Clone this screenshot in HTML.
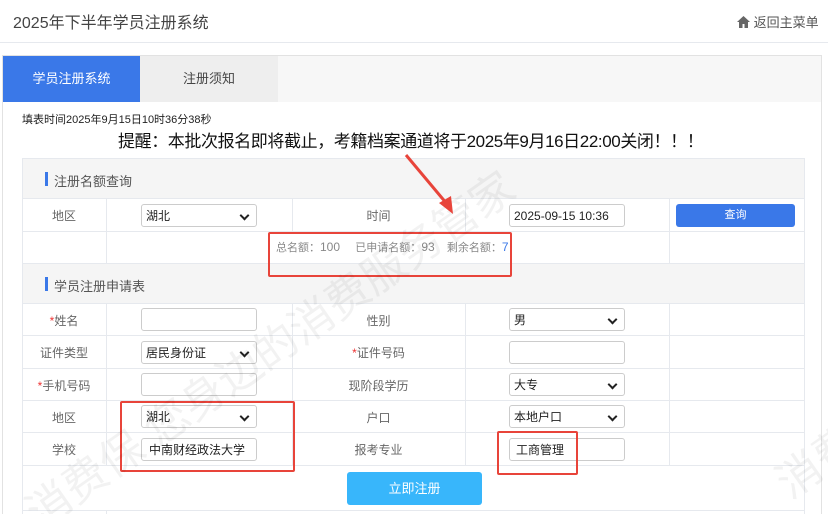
<!DOCTYPE html>
<html><head><meta charset="utf-8"><style>
*{box-sizing:border-box;margin:0;padding:0}
html,body{width:828px;height:514px;overflow:hidden}
body{background:#fff;position:relative;font-family:"Liberation Sans","Noto Sans CJK SC",sans-serif;color:#555}
.a{position:absolute}
.hl{background:#e6e9ee}
.lbl{position:absolute;font-size:12px;color:#666;text-align:center}
.inp{position:absolute;height:23px;border:1px solid #ccc;border-radius:3px;background:#fff;font-size:12px;color:#222;padding:4px 4px;line-height:14px}
.sel::after{content:"";position:absolute;right:8px;top:7px;width:5px;height:5px;border-right:2px solid #222;border-bottom:2px solid #222;transform:rotate(45deg)}
.red{position:absolute;border:2px solid #e8443a;border-radius:2px}
.sec{position:absolute;left:23px;width:781px;height:40px;background:#f5f5f5;font-size:13px;color:#555;padding:12px 0 0 22px}
.sec::before{content:"";position:absolute;left:22px;top:13px;width:3px;height:14px;background:#3a78e8}
.sec span{margin-left:9px}
</style></head><body>
<div class="a" style="left:13px;top:9px;font-size:16px;color:#444">2025年下半年学员注册系统</div>
<div class="a" style="left:737px;top:12px;font-size:13px;color:#555"><svg width="13" height="12" viewBox="0 0 13 12" style="vertical-align:-1px"><path d="M6.5 0L0 6h2v6h3.5V8h2v4H11V6h2z" fill="#666"/></svg> 返回主菜单</div>
<div class="a hl" style="left:0;top:42px;width:828px;height:1px"></div>
<div class="a" style="left:2px;top:55px;width:820px;height:459px;border:1px solid #e2e2e2;border-bottom:none"></div>
<div class="a" style="left:3px;top:56px;width:818px;height:46px;background:#f7f7f7"></div>
<div class="a" style="left:3px;top:56px;width:137px;height:46px;background:#3a78e8;color:#fff;font-size:13px;text-align:center;line-height:46px">学员注册系统</div>
<div class="a" style="left:140px;top:56px;width:138px;height:46px;background:#eee;color:#444;font-size:13px;text-align:center;line-height:46px">注册须知</div>
<div class="a" style="left:22px;top:111px;font-size:11px;color:#222">填表时间2025年9月15日10时36分38秒</div>
<div class="a" style="left:118px;top:127px;font-size:17px;letter-spacing:-0.4px;color:#111;white-space:nowrap">提醒：本批次报名即将截止，考籍档案通道将于2025年9月16日22:00关闭！！！</div>
<div class="a" style="left:22px;top:158px;width:783px;height:356px;border:1px solid #e6e9ee;border-bottom:none"></div>
<div class="sec" style="top:159px"><span>注册名额查询</span></div>
<div class="sec" style="top:264px"><span>学员注册申请表</span></div>
<div class="a hl" style="left:22px;top:198px;width:783px;height:1px"></div>
<div class="a hl" style="left:22px;top:231px;width:783px;height:1px"></div>
<div class="a hl" style="left:22px;top:263px;width:783px;height:1px"></div>
<div class="a hl" style="left:22px;top:303px;width:783px;height:1px"></div>
<div class="a hl" style="left:22px;top:335px;width:783px;height:1px"></div>
<div class="a hl" style="left:22px;top:368px;width:783px;height:1px"></div>
<div class="a hl" style="left:22px;top:400px;width:783px;height:1px"></div>
<div class="a hl" style="left:22px;top:432px;width:783px;height:1px"></div>
<div class="a hl" style="left:22px;top:465px;width:783px;height:1px"></div>
<div class="a hl" style="left:22px;top:510px;width:783px;height:1px"></div>
<div class="a hl" style="left:106px;top:198px;width:1px;height:65px"></div>
<div class="a hl" style="left:292px;top:198px;width:1px;height:33px"></div>
<div class="a hl" style="left:465px;top:198px;width:1px;height:33px"></div>
<div class="a hl" style="left:669px;top:198px;width:1px;height:65px"></div>
<div class="a hl" style="left:106px;top:303px;width:1px;height:162px"></div>
<div class="a hl" style="left:292px;top:303px;width:1px;height:162px"></div>
<div class="a hl" style="left:465px;top:303px;width:1px;height:162px"></div>
<div class="a hl" style="left:669px;top:303px;width:1px;height:162px"></div>
<div class="a hl" style="left:106px;top:510px;width:1px;height:4px"></div>
<div class="lbl" style="left:22px;top:207px;width:84px">地区</div>
<div class="inp sel" style="left:141px;top:204px;width:116px">湖北</div>
<div class="lbl" style="left:292px;top:207px;width:173px">时间</div>
<div class="inp" style="left:509px;top:204px;width:116px">2025-09-15 10:36</div>
<div class="a" style="left:676px;top:204px;width:119px;height:23px;background:#3a78e8;border-radius:3px;color:#fff;font-size:11px;text-align:center;line-height:23px">查询</div>
<div class="a" style="left:276px;top:239px;font-size:11px;color:#888;white-space:nowrap">总名额：<span style="font-size:12px">100</span>&nbsp;&nbsp;&nbsp;&nbsp;&nbsp;已申请名额：<span style="font-size:12px">93</span>&nbsp;&nbsp;&nbsp;&nbsp;剩余名额：<span style="color:#3a78e8;font-size:12px">7</span></div>
<div class="lbl" style="left:22px;top:312px;width:84px"><span style="color:#e33">*</span>姓名</div>
<div class="inp" style="left:141px;top:308px;width:116px"></div>
<div class="lbl" style="left:292px;top:312px;width:173px">性别</div>
<div class="inp sel" style="left:509px;top:308px;width:116px">男</div>
<div class="lbl" style="left:22px;top:344px;width:84px">证件类型</div>
<div class="inp sel" style="left:141px;top:341px;width:116px">居民身份证</div>
<div class="lbl" style="left:292px;top:344px;width:173px"><span style="color:#e33">*</span>证件号码</div>
<div class="inp" style="left:509px;top:341px;width:116px"></div>
<div class="lbl" style="left:22px;top:377px;width:84px"><span style="color:#e33">*</span>手机号码</div>
<div class="inp" style="left:141px;top:373px;width:116px"></div>
<div class="lbl" style="left:292px;top:377px;width:173px">现阶段学历</div>
<div class="inp sel" style="left:509px;top:373px;width:116px">大专</div>
<div class="lbl" style="left:22px;top:409px;width:84px">地区</div>
<div class="inp sel" style="left:141px;top:405px;width:116px">湖北</div>
<div class="lbl" style="left:292px;top:409px;width:173px">户口</div>
<div class="inp sel" style="left:509px;top:405px;width:116px">本地户口</div>
<div class="lbl" style="left:22px;top:441px;width:84px">学校</div>
<div class="inp" style="left:141px;top:438px;width:116px;padding-left:7px">中南财经政法大学</div>
<div class="lbl" style="left:292px;top:441px;width:173px">报考专业</div>
<div class="inp" style="left:509px;top:438px;width:116px;padding-left:6px">工商管理</div>
<div class="a" style="left:347px;top:472px;width:135px;height:33px;background:#38b6fb;border-radius:3px;color:#fff;font-size:13px;text-align:center;line-height:33px">立即注册</div>
<div class="red" style="left:268px;top:232px;width:244px;height:45px"></div>
<div class="red" style="left:120px;top:401px;width:175px;height:71px"></div>
<div class="red" style="left:497px;top:431px;width:81px;height:44px"></div>
<svg class="a" style="left:0;top:0;pointer-events:none" width="828" height="514" overflow="hidden">
<g fill="rgba(0,0,0,0.05)" font-size="44" font-family="Liberation Sans, Noto Sans CJK SC, sans-serif">
<text transform="translate(40,530) rotate(-35)">消费保 您身边的消费服务管家</text>
<text transform="translate(790,500) rotate(-35)">消费</text>
</g>
<path d="M406 155L447 204" stroke="#e8443a" stroke-width="3"/><path d="M453 214L439 203L451 196Z" fill="#e8443a"/></svg>
</body></html>
